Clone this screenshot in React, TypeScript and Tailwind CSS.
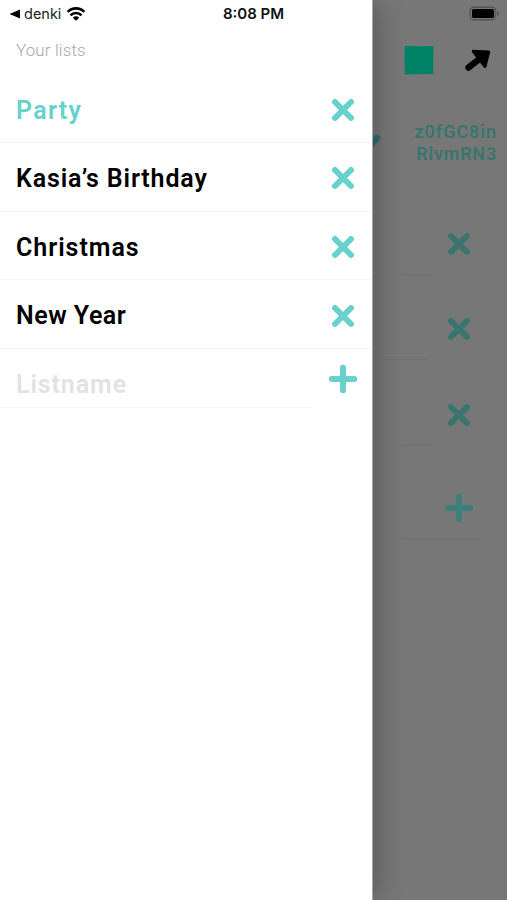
import clsx from 'clsx';

const LISTS = [
  { name: 'Party', active: true, tracking: 'tracking-[1.3px]' },
  { name: 'Kasia’s Birthday', active: false, tracking: 'tracking-[0.85px]' },
  { name: 'Christmas', active: false, tracking: 'tracking-[0.95px]' },
  { name: 'New Year', active: false, tracking: 'tracking-[0.5px]' },
];

const ITEM_LINES = ['w-[32px] mr-[75px]', 'w-[45px] mr-[78px]', 'w-[32px] mr-[75px]'];

function CrossIcon({ className }: { className?: string }) {
  return (
    <svg viewBox="0 0 24 24" className={clsx('h-6 w-6', className)} fill="none" stroke="currentColor" strokeWidth="6" strokeLinecap="round">
      <path d="M4 4l16 16M20 4L4 20" />
    </svg>
  );
}

function PlusIcon({ className }: { className?: string }) {
  return (
    <svg viewBox="0 0 30 30" className={clsx('h-[30px] w-[30px]', className)} fill="none" stroke="currentColor" strokeWidth="6" strokeLinecap="round">
      <path d="M15 3.8v22.4M3.8 15h22.4" />
    </svg>
  );
}

function WifiIcon() {
  return (
    <svg viewBox="0 0 20 14" className="ml-[5px] h-[14px] w-[20px]" fill="none" stroke="currentColor" strokeWidth="2.6">
      <path d="M1.6 4.9a11.8 11.8 0 0 1 16.8 0M4.5 8.3a7.7 7.7 0 0 1 11 0" />
      <path d="M10 13.8L6.8 10.7a4.5 4.5 0 0 1 6.4 0z" fill="currentColor" stroke="none" />
    </svg>
  );
}

function BatteryIcon() {
  return (
    <svg viewBox="0 0 32 16" className="h-4 w-8">
      <rect x="1.2" y="1.2" width="25.4" height="12.6" rx="3.6" fill="none" stroke="#545454" strokeWidth="1.4" />
      <rect x="3" y="3" width="22" height="9" rx="1.6" fill="#000" />
      <path d="M28.2 5.3v4.6c1.1-.4 1.8-1.3 1.8-2.3s-.7-1.9-1.8-2.3z" fill="#545454" />
    </svg>
  );
}

// The list screen that stays dimmed under the open drawer
function ListPage() {
  return (
    <div className="flex h-full flex-col bg-[#777777] text-[#39756f]">
      <div className="flex h-[27px] items-center justify-end pr-[6px]">
        <BatteryIcon />
      </div>
      <div className="flex h-[65px] items-center justify-end gap-[30px] pr-[15px]">
        <svg viewBox="0 0 30 30" className="h-[30px] w-[30px]">
          <path d="M.8.8L15 1.3 29.5 1l-.3 14 .2 14-10 .1L1 29.4.5 15z" fill="#008266" />
        </svg>
        <svg viewBox="0 0 28 24" className="h-6 w-7" fill="#000" stroke="#000" strokeLinejoin="round" strokeLinecap="round">
          <path d="M9.3 3.3L24.7 3.9 21 18.5z" strokeWidth="3" />
          <path d="M4.5 19.5L16 10.5" strokeWidth="6.4" />
        </svg>
      </div>
      <div className="flex h-[102px] items-center justify-end pr-[10px]">
        <svg viewBox="0 0 30 24" className="mt-[2px] mr-[31px] h-6 w-[30px] shrink-0" fill="none" stroke="#2c7069" strokeWidth="6.4" strokeLinecap="round" strokeLinejoin="round">
          <path d="M2 13l9 8L24 6" />
        </svg>
        <div className="w-[83px] text-right text-[18px] leading-[22px] font-semibold whitespace-nowrap">
          <div className="tracking-[0.95px]">z0fGC8in</div>
          <div className="tracking-[0.8px]">RlvmRN3</div>
        </div>
      </div>
      <div className="mt-[20px] flex flex-col">
        {ITEM_LINES.map((line, i) => (
          <div key={i} className="mb-[25px] flex h-[60.5px] flex-col items-end">
            <div className="flex flex-1 items-center pr-[36px]">
              <CrossIcon />
            </div>
            <div className={clsx('h-px bg-[#717171]', line)} />
          </div>
        ))}
      </div>
      <div className="flex h-[68px] flex-col items-end">
        <div className="flex flex-1 items-center pt-[8px] pr-[33px]">
          <PlusIcon className="text-[#3b807a]" />
        </div>
        <div className="mr-[27px] h-px w-20 bg-[#717171]" />
      </div>
    </div>
  );
}

function Drawer() {
  return (
    <div className="absolute inset-y-0 left-0 w-[373px] border-r border-[#a6a6a6] bg-white shadow-[0_0_28px_rgba(0,0,0,0.32)]">
      <div className="flex h-[27px] items-center pl-[9px] text-black">
        <svg viewBox="0 0 12 10" className="h-[10px] w-3" fill="currentColor">
          <path d="M.5 5L11 .5v9z" />
        </svg>
        <span className="mt-px ml-[3px] font-['Inter',sans-serif] text-[14.5px] text-[#222]">denki</span>
        <WifiIcon />
      </div>
      <div className="flex h-[47.6px] items-center pl-4 text-[17px] font-light tracking-[0.1px] text-[#a8a8a8]">
        Your lists
      </div>
      {LISTS.map((list) => (
        <div
          key={list.name}
          className="flex h-[68.6px] items-center justify-between border-b border-[#f4f4f4] pt-[3px] pr-[17px] pl-4"
        >
          <span className={clsx('pt-px text-[25px] font-semibold', list.tracking, list.active ? 'text-[#68d1cd]' : 'text-black')}>
            {list.name}
          </span>
          <CrossIcon className="text-[#68d1cd]" />
        </div>
      ))}
      <div className="flex h-[60px] items-start justify-between pr-[14px]">
        <div className="flex h-[59px] w-[312px] items-center border-b border-[#f7f7f7] pt-[14px] pl-4 text-[25px] font-semibold tracking-[0.9px] text-[#e2e2e2]">
          Listname
        </div>
        <PlusIcon className="mt-[15px] text-[#68d1cd]" />
      </div>
    </div>
  );
}

export default function App() {
  return (
    <div className="relative h-[900px] w-[507px] overflow-hidden font-['Roboto',sans-serif]">
      <ListPage />
      <Drawer />
      <div className="absolute top-px left-0 flex h-[27px] w-full items-center justify-center font-['Inter',sans-serif] text-[15px] font-semibold text-[#111]">
        8:08 PM
      </div>
    </div>
  );
}
